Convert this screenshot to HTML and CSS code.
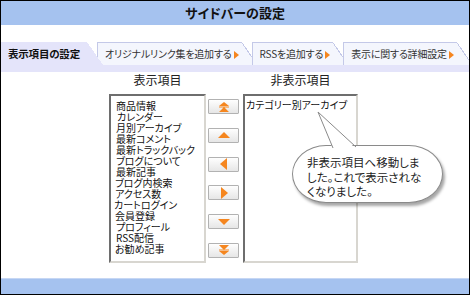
FILE: index.html
```html
<!DOCTYPE html>
<html lang="ja">
<head>
  <meta charset="UTF-8" />
  <title>サイドバーの設定</title>
  <link rel="stylesheet" href="styles.css">
</head>
<body>
  <div class="frame">
    <div class="title">サイドバーの設定</div>

    <div class="tabs">
      <div class="tab tab-active">表示項目の設定</div>
      <div class="tab">オリジナルリンク集を追加する<span class="arrow"></span></div>
      <div class="tab">RSSを追加する<span class="arrow"></span></div>
      <div class="tab">表示に関する詳細設定<span class="arrow"></span></div>
    </div>
    <div class="tab-strip"></div>

    <div class="editor">
      <div class="col-label">表示項目</div>
      <div></div>
      <div class="col-label">非表示項目</div>

      <ul class="listbox listbox-shown">
        <li>商品情報</li>
        <li class="in1">カレンダー</li>
        <li>月別アーカイブ</li>
        <li>最新コメント</li>
        <li>最新トラックバック</li>
        <li>ブログについて</li>
        <li>最新記事</li>
        <li class="out1">ブログ内検索</li>
        <li class="out1">アクセス数</li>
        <li class="out2">カートログイン</li>
        <li class="out1">会員登録</li>
        <li>プロフィール</li>
        <li>RSS配信</li>
        <li class="out1">お勧め記事</li>
      </ul>

      <div class="buttons">
        <button class="move-btn" title="先頭へ"><svg width="12" height="10" viewBox="0 0 12 10"><path d="M6 0L11 4H1Z M1 4.5H11V5.5H1Z M6 5L11 10H1Z"/></svg></button>
        <button class="move-btn" title="上へ"><svg width="12" height="10" viewBox="0 0 12 10"><path d="M6 2L12 8H0Z"/></svg></button>
        <button class="move-btn" title="非表示へ"><svg width="12" height="12" viewBox="0 0 12 12"><path d="M2 6L9 0V12Z"/></svg></button>
        <button class="move-btn" title="表示へ"><svg width="12" height="12" viewBox="0 0 12 12"><path d="M10 6L3 0V12Z"/></svg></button>
        <button class="move-btn" title="下へ"><svg width="12" height="10" viewBox="0 0 12 10"><path d="M6 8L12 2H0Z"/></svg></button>
        <button class="move-btn" title="末尾へ"><svg width="12" height="10" viewBox="0 0 12 10"><path d="M6 10L11 6H1Z M1 4.5H11V5.5H1Z M6 5L11 0H1Z"/></svg></button>
      </div>

      <ul class="listbox listbox-hidden">
        <li>カテゴリー別アーカイブ</li>
      </ul>
    </div>

    <div class="bubble">非表示項目へ移動しま<br>した。これで表示されな<br>くなりました。</div>
    <svg class="bubble-tail" width="48" height="40" viewBox="0 0 48 40">
      <polygon points="16,38 1,1 39,38" fill="#fff" />
      <polyline points="16,37 1,1 39,36" fill="none" stroke="#8a8a8a" stroke-width="1" />
    </svg>

    <div class="footer"></div>
  </div>
</body>
</html>
```

FILE: styles.css
```css
body {
  margin: 0;
  font-family: "Noto Sans CJK JP", "Noto Sans", sans-serif;
  font-feature-settings: "palt";
  color: #222;
}
.frame {
  position: relative;
  width: 470px;
  height: 295px;
  box-sizing: border-box;
  border: 1px solid #000;
  display: flex;
  flex-direction: column;
  background: #fff;
  overflow: hidden;
}
.title {
  height: 24px;
  line-height: 24px;
  background: #a5c2ef;
  text-align: center;
  font-size: 13px;
  font-weight: bold;
  color: #111;
}
.tabs {
  display: flex;
  margin-top: 17px;
  height: 23px;
}
.tab {
  position: relative;
  height: 22px;
  line-height: 22px;
  padding: 0 3px 0 7px;
  background: #f4f6fd;
  border-top: 1px solid #c4c9e8;
  border-left: 1px solid #c4c9e8;
  font-size: 10px;
  letter-spacing: -0.2px;
  color: #333;
  white-space: nowrap;
}
.tab::after {
  content: "";
  position: absolute;
  left: 100%;
  top: -1px;
  width: 16px;
  height: 23px;
  background: linear-gradient(to top right, #f4f6fd calc(50% - 1px), #c4c9e8 calc(50% - 1px), #c4c9e8 50%, transparent 50%);
}
.tab + .tab {
  margin-left: 10px;
}
.tab-active {
  z-index: 2;
  background: #e4e4fa;
  border-color: #e4e4fa;
  border-left: none;
  padding: 0 7px 0 7px;
  font-weight: bold;
  font-size: 10.5px;
  color: #111;
}
.tab-active::after {
  background: linear-gradient(to top right, #e4e4fa 50%, transparent 50%);
}
.arrow {
  display: inline-block;
  margin-left: 2px;
  width: 0;
  height: 0;
  border-top: 4px solid transparent;
  border-bottom: 4px solid transparent;
  border-left: 5px solid #f5861f;
  vertical-align: -1px;
}
.tab-strip {
  height: 7px;
  background: #e4e4fa;
}
.editor {
  display: grid;
  grid-template-columns: 97px 37px 115px;
  grid-template-rows: 22px 169px;
  margin-left: 108px;
}
.col-label {
  line-height: 16px;
  font-size: 12px;
  text-align: center;
  color: #222;
}
.listbox {
  margin: 0;
  list-style: none;
  box-sizing: border-box;
  border: 2px solid;
  border-color: #6e6e6e #d8d6d0 #d8d6d0 #6e6e6e;
  background: #fff;
  font-size: 10px;
  line-height: 11px;
  color: #111;
}
.listbox-shown {
  padding: 4px 0 0 5px;
}
.listbox-hidden {
  padding: 3px 0 0 1px;
}
.in1 {
  padding-left: 1px;
}
.out1 {
  margin-left: -1px;
}
.out2 {
  margin-left: -2px;
}
.buttons {
  display: flex;
  flex-direction: column;
  justify-content: space-between;
  padding: 5px 4px 5px 2px;
}
.move-btn {
  width: 31px;
  height: 15px;
  padding: 0;
  display: flex;
  align-items: center;
  justify-content: center;
  border: 1px solid #b2b2b2;
  border-radius: 1px;
  background: linear-gradient(#fefefe, #e6e6e6);
}
.move-btn svg {
  fill: #f5861f;
}
.bubble {
  position: absolute;
  left: 291px;
  top: 144px;
  width: 151px;
  height: 58px;
  box-sizing: border-box;
  padding: 9px 0 0 14px;
  background: #fff;
  border: 1px solid #8a8a8a;
  border-radius: 34px / 29px;
  box-shadow: 2px 3px 3px rgba(0, 0, 0, 0.35);
  font-size: 11.5px;
  line-height: 14.5px;
  color: #222;
}
.bubble-tail {
  position: absolute;
  left: 316px;
  top: 110px;
}
.footer {
  margin-top: auto;
  height: 15px;
  background: #a5c2ef;
  border-top: 1px solid #c6d7f4;
}
```
